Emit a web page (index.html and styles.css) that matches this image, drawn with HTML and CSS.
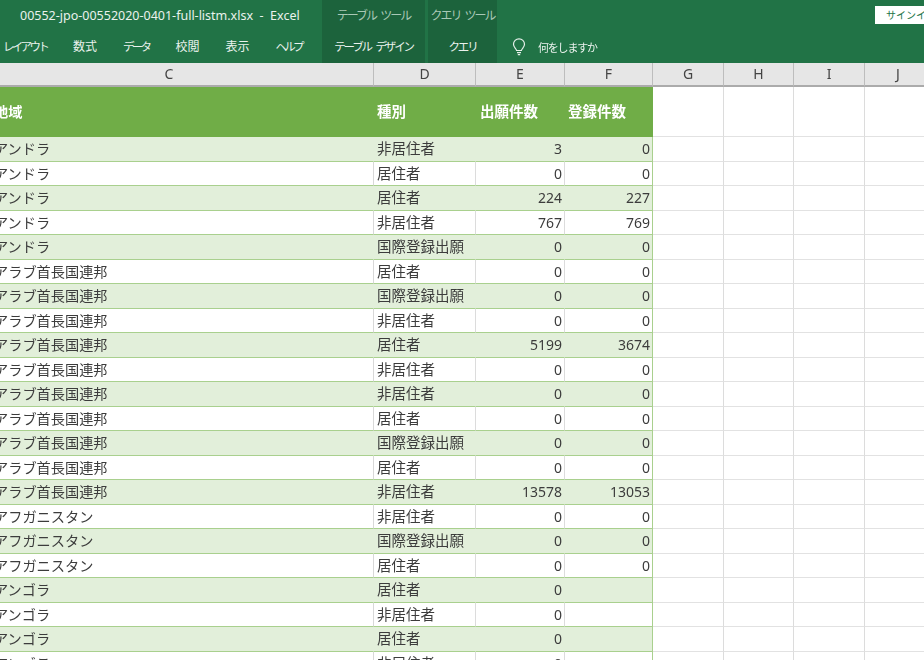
FILE: index.html
```html
<!DOCTYPE html>
<html lang="ja">
<head>
  <meta charset="UTF-8">
  <title>00552-jpo-00552020-0401-full-listm.xlsx - Excel</title>
  <link rel="stylesheet" href="styles.css">
</head>
<body>

<!-- Ribbon -->
<header class="ribbon">
  <div class="ribbon-main">
    <div class="title">00552-jpo-00552020-0401-full-listm.xlsx&nbsp; - &nbsp;Excel</div>
    <nav class="tabs">
      <span class="tab kana">レイアウト</span>
      <span class="tab">数式</span>
      <span class="tab kana">データ</span>
      <span class="tab">校閲</span>
      <span class="tab">表示</span>
      <span class="tab kana">ヘルプ</span>
    </nav>
  </div>
  <div class="tool tool-table">
    <div class="tool-label">テーブル ツール</div>
    <div class="tool-tab kana">テーブル デザイン</div>
  </div>
  <div class="tool tool-query">
    <div class="tool-label">クエリ ツール</div>
    <div class="tool-tab kana">クエリ</div>
  </div>
  <div class="ribbon-rest">
    <div class="signin-row"><span class="signin">サインイン</span></div>
    <div class="search">
      <svg class="bulb" width="14" height="18" viewBox="0 0 14 18" fill="none" stroke="#e6f0ea" stroke-width="1.2">
        <path d="M4.6 12.5C4.4 10.6 1.5 9.4 1.5 6.3a5.5 5.5 0 0 1 11 0c0 3.100-2.900 4.300-3.100 6.200z"/>
        <path d="M5 14.600h4M5.800 16.600h2.400"/>
      </svg>
      <span class="search-text">何をしますか</span>
    </div>
  </div>
</header>

<!-- Sheet -->
<main class="sheet">
  <div class="row col-heads">
    <span class="cell head-c">C</span><span class="cell">D</span><span class="cell">E</span><span class="cell">F</span><span class="cell">G</span><span class="cell">H</span><span class="cell">I</span><span class="cell">J</span>
  </div>
  <div class="row table-head">
    <span class="cell text">地域</span><span class="cell text">種別</span><span class="cell text">出願件数</span><span class="cell text">登録件数</span><span class="cell"></span><span class="cell"></span><span class="cell"></span><span class="cell"></span>
  </div>
  <div class="row"><span class="cell text">アンドラ</span><span class="cell text">非居住者</span><span class="cell num">3</span><span class="cell num">0</span><span class="cell"></span><span class="cell"></span><span class="cell"></span><span class="cell"></span></div>
  <div class="row"><span class="cell text">アンドラ</span><span class="cell text">居住者</span><span class="cell num">0</span><span class="cell num">0</span><span class="cell"></span><span class="cell"></span><span class="cell"></span><span class="cell"></span></div>
  <div class="row"><span class="cell text">アンドラ</span><span class="cell text">居住者</span><span class="cell num">224</span><span class="cell num">227</span><span class="cell"></span><span class="cell"></span><span class="cell"></span><span class="cell"></span></div>
  <div class="row"><span class="cell text">アンドラ</span><span class="cell text">非居住者</span><span class="cell num">767</span><span class="cell num">769</span><span class="cell"></span><span class="cell"></span><span class="cell"></span><span class="cell"></span></div>
  <div class="row"><span class="cell text">アンドラ</span><span class="cell text">国際登録出願</span><span class="cell num">0</span><span class="cell num">0</span><span class="cell"></span><span class="cell"></span><span class="cell"></span><span class="cell"></span></div>
  <div class="row"><span class="cell text">アラブ首長国連邦</span><span class="cell text">居住者</span><span class="cell num">0</span><span class="cell num">0</span><span class="cell"></span><span class="cell"></span><span class="cell"></span><span class="cell"></span></div>
  <div class="row"><span class="cell text">アラブ首長国連邦</span><span class="cell text">国際登録出願</span><span class="cell num">0</span><span class="cell num">0</span><span class="cell"></span><span class="cell"></span><span class="cell"></span><span class="cell"></span></div>
  <div class="row"><span class="cell text">アラブ首長国連邦</span><span class="cell text">非居住者</span><span class="cell num">0</span><span class="cell num">0</span><span class="cell"></span><span class="cell"></span><span class="cell"></span><span class="cell"></span></div>
  <div class="row"><span class="cell text">アラブ首長国連邦</span><span class="cell text">居住者</span><span class="cell num">5199</span><span class="cell num">3674</span><span class="cell"></span><span class="cell"></span><span class="cell"></span><span class="cell"></span></div>
  <div class="row"><span class="cell text">アラブ首長国連邦</span><span class="cell text">非居住者</span><span class="cell num">0</span><span class="cell num">0</span><span class="cell"></span><span class="cell"></span><span class="cell"></span><span class="cell"></span></div>
  <div class="row"><span class="cell text">アラブ首長国連邦</span><span class="cell text">非居住者</span><span class="cell num">0</span><span class="cell num">0</span><span class="cell"></span><span class="cell"></span><span class="cell"></span><span class="cell"></span></div>
  <div class="row"><span class="cell text">アラブ首長国連邦</span><span class="cell text">居住者</span><span class="cell num">0</span><span class="cell num">0</span><span class="cell"></span><span class="cell"></span><span class="cell"></span><span class="cell"></span></div>
  <div class="row"><span class="cell text">アラブ首長国連邦</span><span class="cell text">国際登録出願</span><span class="cell num">0</span><span class="cell num">0</span><span class="cell"></span><span class="cell"></span><span class="cell"></span><span class="cell"></span></div>
  <div class="row"><span class="cell text">アラブ首長国連邦</span><span class="cell text">居住者</span><span class="cell num">0</span><span class="cell num">0</span><span class="cell"></span><span class="cell"></span><span class="cell"></span><span class="cell"></span></div>
  <div class="row"><span class="cell text">アラブ首長国連邦</span><span class="cell text">非居住者</span><span class="cell num">13578</span><span class="cell num">13053</span><span class="cell"></span><span class="cell"></span><span class="cell"></span><span class="cell"></span></div>
  <div class="row"><span class="cell text">アフガニスタン</span><span class="cell text">非居住者</span><span class="cell num">0</span><span class="cell num">0</span><span class="cell"></span><span class="cell"></span><span class="cell"></span><span class="cell"></span></div>
  <div class="row"><span class="cell text">アフガニスタン</span><span class="cell text">国際登録出願</span><span class="cell num">0</span><span class="cell num">0</span><span class="cell"></span><span class="cell"></span><span class="cell"></span><span class="cell"></span></div>
  <div class="row"><span class="cell text">アフガニスタン</span><span class="cell text">居住者</span><span class="cell num">0</span><span class="cell num">0</span><span class="cell"></span><span class="cell"></span><span class="cell"></span><span class="cell"></span></div>
  <div class="row"><span class="cell text">アンゴラ</span><span class="cell text">居住者</span><span class="cell num">0</span><span class="cell num"></span><span class="cell"></span><span class="cell"></span><span class="cell"></span><span class="cell"></span></div>
  <div class="row"><span class="cell text">アンゴラ</span><span class="cell text">非居住者</span><span class="cell num">0</span><span class="cell num"></span><span class="cell"></span><span class="cell"></span><span class="cell"></span><span class="cell"></span></div>
  <div class="row"><span class="cell text">アンゴラ</span><span class="cell text">居住者</span><span class="cell num">0</span><span class="cell num"></span><span class="cell"></span><span class="cell"></span><span class="cell"></span><span class="cell"></span></div>
  <div class="row"><span class="cell text">アンゴラ</span><span class="cell text">非居住者</span><span class="cell num">0</span><span class="cell num"></span><span class="cell"></span><span class="cell"></span><span class="cell"></span><span class="cell"></span></div>
</main>

</body>
</html>
```

FILE: styles.css
```css
html, body {
  height: 100%;
}
body {
  margin: 0;
  overflow: hidden;
  background: white;
  font-family: "Noto Sans", "Noto Sans CJK JP", sans-serif;
  color: #3c3c3c;
  filter: blur(0.4px);
}

/* Ribbon */
.ribbon {
  display: flex;
  height: 63px;
  background: #217346;
  color: #eaf2ed;
  font-size: 12px;
}
.ribbon-main {
  width: 322px;
  flex: none;
}
.title {
  height: 31px;
  padding-left: 20px;
  line-height: 31px;
  white-space: nowrap;
  font-size: 12.5px;
}
.tabs {
  display: flex;
  height: 32px;
  line-height: 32px;
}
.tab {
  white-space: nowrap;
  margin-left: 26px;
}
.tab:first-child {
  margin-left: 3px;
}
.kana {
  font-size: 11.5px;
  letter-spacing: -2.7px;
}
.tool {
  flex: none;
  background: #1c633c;
  text-align: center;
}
.tool-table {
  width: 103px;
  margin-right: 3px;
}
.tool-query {
  width: 69px;
}
.tool-label {
  height: 31px;
  line-height: 31px;
  color: #a9c8b6;
  white-space: nowrap;
  letter-spacing: -2px;
  word-spacing: 3px;
}
.tool-tab {
  height: 32px;
  line-height: 32px;
  white-space: nowrap;
  letter-spacing: -2.2px;
  word-spacing: 4px;
}
.ribbon-rest {
  flex: 1;
}
.signin-row {
  display: flex;
  justify-content: flex-end;
  height: 31px;
  padding-top: 6px;
  box-sizing: border-box;
}
.signin {
  width: 49px;
  height: 18px;
  padding-left: 11px;
  box-sizing: border-box;
  background: white;
  color: #217346;
  font-size: 10px;
  line-height: 18px;
  white-space: nowrap;
  overflow: hidden;
}
.search {
  display: flex;
  align-items: center;
  height: 32px;
  padding-left: 15px;
}
.search-text {
  margin-left: 12px;
  font-size: 11px;
  letter-spacing: -1.2px;
}

/* Sheet */
.sheet {
  margin-left: -7px;
  width: 940px;
  font-size: 14px;
}
.row {
  display: grid;
  grid-template-columns: 381px 102px 89px 88px 71px 70px 71px 67px;
  height: 24.52px;
  line-height: 23px;
  white-space: nowrap;
}
.cell {
  border-right: 1px solid #dcdcdc;
  border-bottom: 1px solid #e2e2e2;
  overflow: hidden;
}
.text {
  padding-left: 3px;
  font-size: 14.5px;
}
.cell:first-child {
  padding-left: 1px;
  font-size: 14.2px;
  border-right-color: #d8d8d8;
}
.num {
  padding-right: 2px;
  text-align: right;
}
.cell:nth-child(4) {
  border-right-color: #a9d08e;
}

/* table rows only, the blank columns keep their plain gridlines */
.row .cell:nth-child(-n+4) {
  border-bottom-color: #a9d08e;
}
.row:nth-child(odd) .cell:nth-child(-n+3) {
  background: #e2efda;
  border-right-color: #e2efda;
}
.row:nth-child(odd) .cell:nth-child(4) {
  background: #e2efda;
}

.row.col-heads {
  height: 24px;
  color: #444;
  text-align: center;
}
.row.col-heads .cell:nth-child(n) {
  border-right: 1px solid #bdbdbd;
  border-bottom: 2px solid #ababab;
  line-height: 22px;
  font-size: 14px;
  background: #e6e6e6;
}
.row.col-heads .head-c {
  padding-right: 29px;
}
.row.table-head {
  height: 50px;
  line-height: 49px;
}
.row.table-head .cell:nth-child(-n+4) {
  background: #70ad47;
  border-color: #70ad47;
  color: white;
  font-weight: bold;
}
.row.table-head .cell:nth-child(3) {
  padding-left: 4px;
}
```
